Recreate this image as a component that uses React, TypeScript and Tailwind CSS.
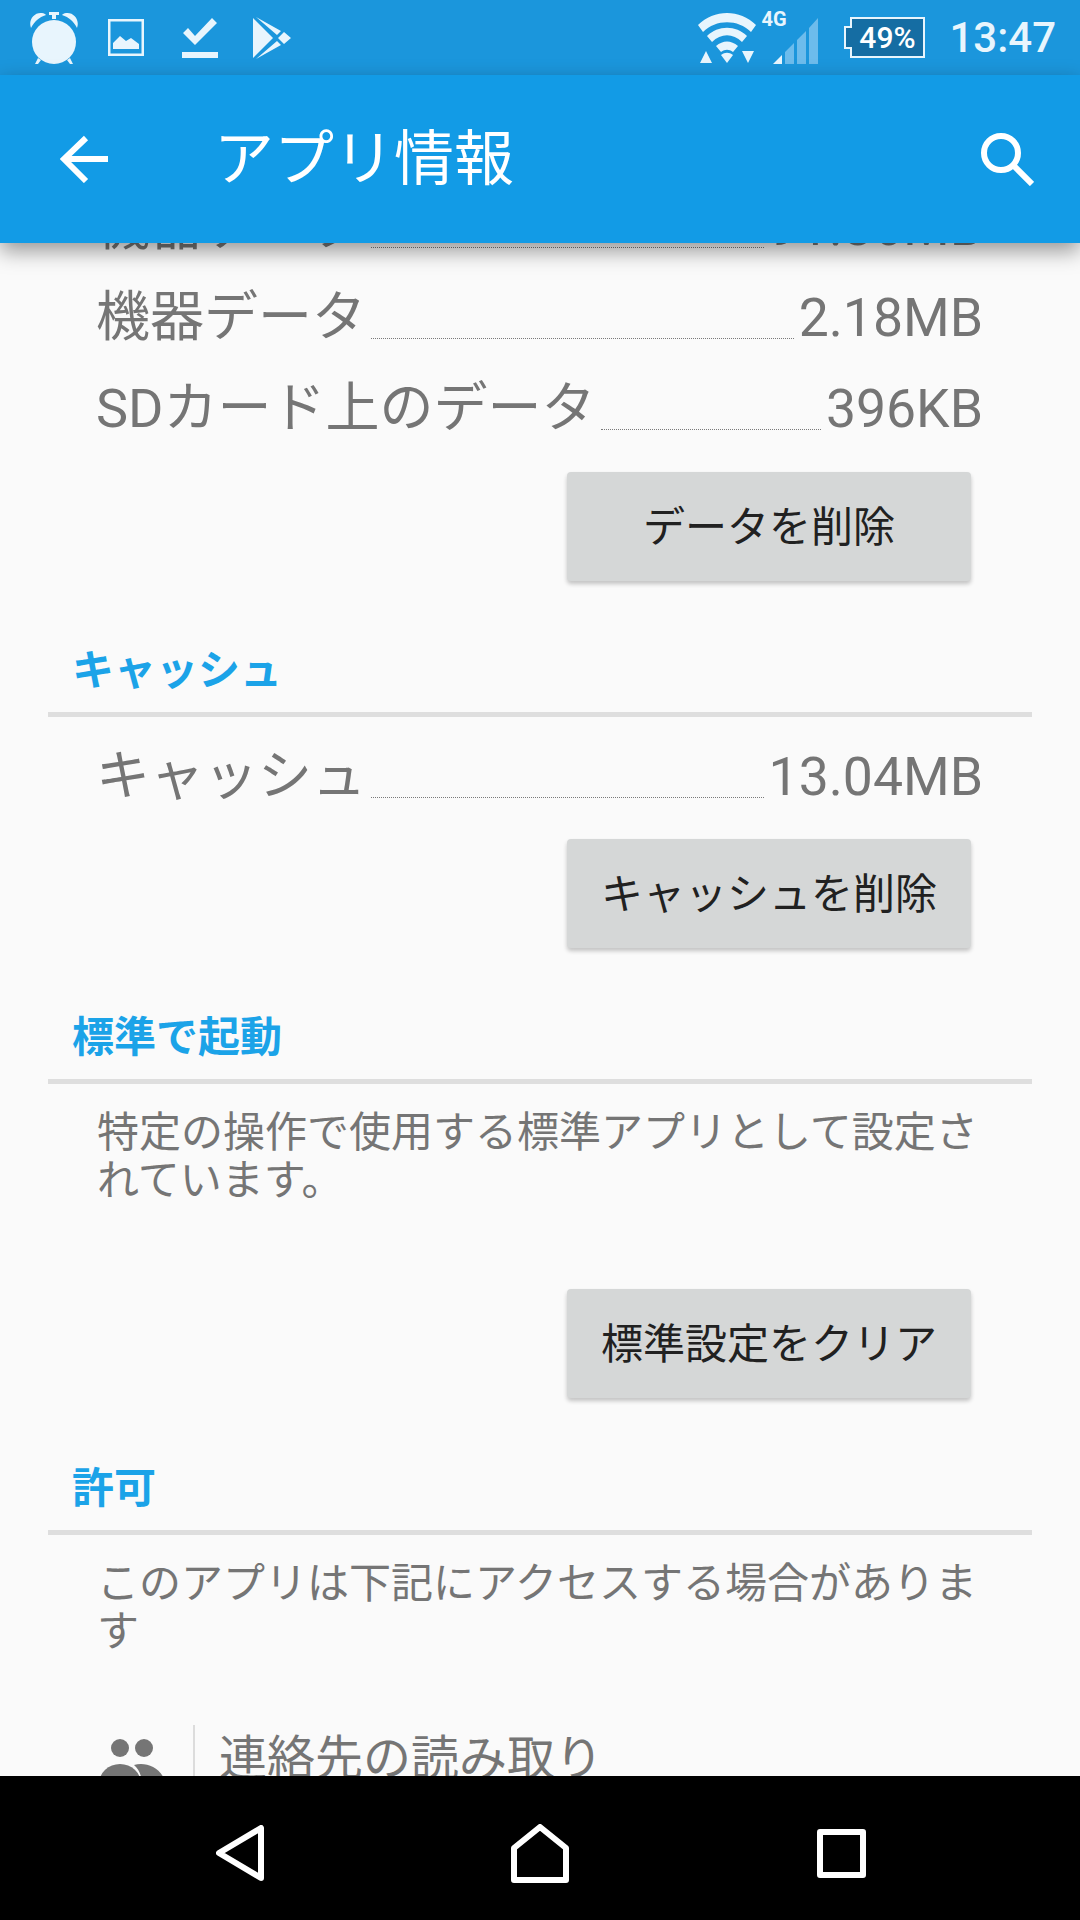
const jp = "font-['Roboto','Noto_Sans_CJK_JP',sans-serif]";

function Row({ label, value }: { label: string; value: string }) {
  return (
    <div className="flex h-[91px] items-center pl-[96px] pr-[97px] pt-[2px] text-[54px] leading-[89px] text-[#757575]">
      <span className="whitespace-nowrap">{label}</span>
      <span className="ml-[5px] mr-[5px] mt-[42px] h-0 flex-1 border-b border-dotted border-[#7a7a7a]" />
      <span className="whitespace-nowrap text-[53.5px]">{value}</span>
    </div>
  );
}

function Btn({ children, className }: { children: string; className: string }) {
  return (
    <div className={`ml-auto mr-[109px] flex h-[109px] w-[404px] items-center justify-center rounded-[4px] bg-[#d5d7d7] pt-[2px] text-[42px] text-[#212121] shadow-[0_3px_4px_rgba(0,0,0,0.22)] ${className}`}>
      {children}
    </div>
  );
}

function Header({ children, className }: { children: string; className: string }) {
  return (
    <div className={className}>
      <div className="h-[50px] pl-[72px] text-[42px] font-bold leading-[52px] text-[#1ba3e8]">{children}</div>
      <div className="mx-[48px] mt-[17px] h-[5px] bg-[#dedede]" />
    </div>
  );
}

function Para({ lines, className }: { lines: string[]; className: string }) {
  return (
    <div className={`pl-[97px] text-[42px] leading-[48px] text-[#757575] ${className}`}>
      {lines.map((l) => (
        <div key={l} className="whitespace-nowrap">{l}</div>
      ))}
    </div>
  );
}

export default function App() {
  return (
    <div className={`flex h-[1920px] w-[1080px] flex-col overflow-hidden bg-[#fafafa] ${jp}`}>
      <div className="flex h-[75px] shrink-0 items-center justify-between bg-[#1b96dc] pl-[29px] pr-[24px]">
        <div className="flex items-center">
          <svg width="50" height="54" viewBox="0 0 50 54" fill="#e8f5fd">
            <circle cx="25" cy="31" r="22" />
            <path d="M2 17C-1 9 5 1 13 2 15 2 16 3 17 4 10 6 5 11 2 17ZM48 17C51 9 45 1 37 2 35 2 34 3 33 4 40 6 45 11 48 17Z" />
            <rect x="20" y="1" width="10" height="3" />
            <rect x="23" y="3" width="4" height="5" />
            <path d="M9 47 6 53H9L12 49ZM41 47 44 53H41L38 49Z" />
          </svg>
          <svg className="ml-[29px]" width="36" height="37" viewBox="0 0 36 37" fill="#e8f5fd">
            <path d="M0 0H36V37H0ZM2.500 2.500V34.500H33.500V2.500Z" fillRule="evenodd" />
            <path d="M5 30V24L12 17 18 22 23 19 31 25V30Z" />
          </svg>
          <svg className="ml-[38px]" width="36" height="44" viewBox="0 0 36 44" fill="#e8f5fd">
            <path d="M1 17 6 12 13 20 30 2 35 7 13 29Z" />
            <rect x="0" y="36" width="36" height="6" />
          </svg>
          <svg className="ml-[34px]" width="40" height="44" viewBox="0 0 40 44" fill="#e8f5fd">
            <path d="M1 2 21 22 1 42ZM4 1 25 19 29 15ZM4 43 25 25 29 29ZM32 16 39 22 32 28 26 22Z" />
          </svg>
        </div>
        <div className="flex items-center">
          <svg width="58" height="50" viewBox="0 0 58 50" fill="#e8f5fd">
            <path d="M0 12C16-4 42-4 58 12L53 19C40 6 18 6 5 19Z" />
            <path d="M9 23C20 12 38 12 49 23L44 29C35 20 23 20 14 29Z" />
            <path d="M18 33C25 27 33 27 40 33L35 39C31 36 27 36 23 39Z" />
            <path d="M23 42C27 39 31 39 35 42L29 50Z" />
            <path d="M8 38 14 50H2ZM44 38H56L50 50Z" />
          </svg>
          <div className="relative ml-[17px] h-[54px] w-[46px]">
            <span className="absolute -left-[12px] -top-[2px] text-[20px] font-bold leading-[20px] text-[#e8f5fd]">4G</span>
            <svg className="absolute left-0 top-[7px]" width="46" height="47" viewBox="0 0 46 47">
              <path d="M0 46 9 37V46Z" fill="#e8f5fd" />
              <path d="M12 46V34L21 25V46ZM24 46V22L33 13V46ZM36 46V10L45 0V46Z" fill="#6dbcec" />
            </svg>
          </div>
          <div className="relative ml-[25px] flex h-[41px] w-[81px] items-center">
            <svg className="absolute left-0 top-0" width="81" height="41" viewBox="0 0 81 41">
              <path d="M7 1H80V40H7V31H1V10H7Z" fill="#156da3" stroke="#e8f5fd" strokeWidth="2" />
            </svg>
            <span className="relative w-full pl-[5px] text-center text-[30px] font-medium leading-[41px] text-white">49%</span>
          </div>
          <span className="ml-[24px] text-[42px] font-medium leading-[75px] text-[#e8f5fd]">13:47</span>
        </div>
      </div>

      <div className="relative z-10 flex h-[168px] shrink-0 items-center bg-[#129be6] shadow-[0_8px_20px_rgba(0,0,0,0.4)]">
        <svg className="ml-[60px]" width="48" height="48" viewBox="0 0 48 48" fill="none" stroke="white" strokeWidth="6">
          <path d="M48 24H5M26 3 4 24 26 46" />
        </svg>
        <span className="ml-[106px] pt-[2px] text-[60px] text-white">アプリ情報</span>
        <svg className="ml-auto mr-[46px]" width="54" height="54" viewBox="0 0 54 54" fill="none" stroke="white" strokeWidth="6">
          <circle cx="21" cy="21" r="17" />
          <path d="M33 33 52 52" />
        </svg>
      </div>

      <div className="min-h-0 flex-1 overflow-hidden">
        <div className="-mt-[63px]">
          <Row label="機器データ" value="91.86MB" />
          <Row label="機器データ" value="2.18MB" />
          <Row label="SDカード上のデータ" value="396KB" />
          <Btn className="mt-[19px]">データを削除</Btn>
          <Header className="mt-[64px]">キャッシュ</Header>
          <div className="mt-[13px]">
            <Row label="キャッシュ" value="13.04MB" />
          </div>
          <Btn className="mt-[18px]">キャッシュを削除</Btn>
          <Header className="mt-[64px]">標準で起動</Header>
          <Para className="mt-[25px]" lines={["特定の操作で使用する標準アプリとして設定さ", "れています。"]} />
          <Btn className="mt-[84px]">標準設定をクリア</Btn>
          <Header className="mt-[65px]">許可</Header>
          <Para className="mt-[25px]" lines={["このアプリは下記にアクセスする場合がありま", "す"]} />
          <div className="mt-[69px] flex h-[100px] pl-[99px]">
            <svg className="mt-[14px]" width="67" height="60" viewBox="0 0 67 60">
              <circle cx="21" cy="9" r="9" fill="#757575" />
              <circle cx="45" cy="9" r="9" fill="#757575" />
              <ellipse cx="21" cy="45" rx="21" ry="20" fill="#757575" />
              <path d="M43 46C43 37 40 30 35 26 48 22 67 30 67 50H43Z" fill="#757575" />
            </svg>
            <div className="ml-[27px] h-full w-[2px] bg-[#dcdcdc]" />
            <span className="ml-[24px] mt-[4px] text-[48px] leading-[60px] text-[#757575]">連絡先の読み取り</span>
          </div>
        </div>
      </div>

      <div className="flex h-[144px] shrink-0 items-center bg-black pl-[216px] pt-[10px]">
        <svg width="48" height="56" viewBox="0 0 48 56" fill="none" stroke="white" strokeWidth="6" strokeLinejoin="round">
          <path d="M45 3V53L3 28Z" />
        </svg>
        <svg className="ml-[247px]" width="58" height="59" viewBox="0 0 58 59" fill="none" stroke="white" strokeWidth="6" strokeLinejoin="round">
          <path d="M3 56V24L29 3 55 24V56Z" />
        </svg>
        <svg className="ml-[248px]" width="49" height="49" viewBox="0 0 49 49" fill="none" stroke="white" strokeWidth="6" strokeLinejoin="round">
          <rect x="3" y="3" width="43" height="43" />
        </svg>
      </div>
    </div>
  );
}
